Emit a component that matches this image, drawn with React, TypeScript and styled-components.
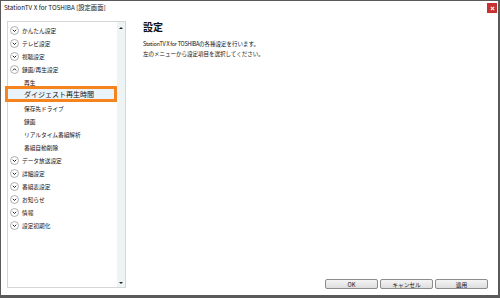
import React from 'react';
import styled, { createGlobalStyle } from 'styled-components';

const Global = createGlobalStyle`
  html, body { margin: 0; padding: 0; background: #ffffff; }
  body { font-family: "Noto Sans CJK JP", "Noto Sans", sans-serif; color: #111; }
`;

const Window = styled.div`
  width: 500px;
  height: 298px;
  box-sizing: border-box;
  border-style: solid;
  border-color: #5a5a5a;
  border-width: 1px 2px 3px 1px;
  background: #ffffff;
  display: flex;
  flex-direction: column;
`;

const TitleBar = styled.div`
  height: 14px;
  display: flex;
  justify-content: space-between;
  align-items: flex-start;
  padding-left: 3px;
`;

const TitleText = styled.span`
  font-size: 6.3px;
  line-height: 13px;
  color: #111;
  white-space: nowrap;
`;

const CloseButton = styled.div`
  width: 10px;
  height: 10px;
  margin-top: 2px;
  margin-right: 1px;
  background: #c8312f;
  display: flex;
  align-items: center;
  justify-content: center;
`;

const Body = styled.div`
  flex: 1;
  display: flex;
  padding: 6px 10px 6px 6px;
  min-height: 0;
`;

const TreePanel = styled.div`
  width: 119px;
  box-sizing: border-box;
  border: 1px solid #d6d6d6;
  margin-bottom: 1px;
  display: flex;
`;

const TreeList = styled.div`
  flex: 1;
  padding-top: 2px;
  position: relative;
`;

const Row = styled.div<{ $sub?: boolean }>`
  height: 13px;
  display: flex;
  align-items: center;
  padding-left: ${p => (p.$sub ? '16px' : '2px')};
  gap: 3px;
  position: relative;
  font-size: 5.7px;
  white-space: nowrap;
  color: #111;
`;

const Highlight = styled.div`
  position: absolute;
  left: -3px;
  top: -3px;
  width: 112px;
  height: 16px;
  box-sizing: border-box;
  border: 3px solid #f5841f;
  background: #e8f3fb;
  display: flex;
  align-items: center;
  padding-left: 16px;
  font-size: 7px;
  color: #111;
  z-index: 2;
`;

const ScrollBar = styled.div`
  width: 8px;
  background: #eef3f3;
  display: flex;
  flex-direction: column;
  justify-content: space-between;
  align-items: center;
  padding: 5px 0 3px;
`;

const Arrow = styled.div<{ $up?: boolean }>`
  width: 0;
  height: 0;
  border-left: 2px solid transparent;
  border-right: 2px solid transparent;
  ${p => (p.$up ? 'border-bottom: 2px solid #222;' : 'border-top: 2px solid #222;')}
`;

const Main = styled.div`
  flex: 1;
  margin-left: 17px;
  display: flex;
  flex-direction: column;
`;

const Heading = styled.div`
  font-size: 10px;
  line-height: 12px;
  font-weight: 700;
  color: #111;
`;

const Description = styled.div`
  margin-top: 6px;
  font-size: 5.5px;
  line-height: 10px;
  color: #111;
  white-space: nowrap;
`;

const Latin = styled.span`
  letter-spacing: -0.25px;
`;

const ButtonRow = styled.div`
  margin-top: auto;
  display: flex;
  justify-content: flex-end;
  gap: 2px;
`;

const Button = styled.div`
  width: 53px;
  height: 10px;
  box-sizing: border-box;
  border: 1px solid #8c8c8c;
  border-radius: 2px;
  background: linear-gradient(#f4f4f4, #dedede);
  display: flex;
  align-items: center;
  justify-content: center;
  font-size: 5.7px;
  color: #111;
`;

const Toggle = ({ up }: { up?: boolean }) => (
  <svg width="9" height="9" viewBox="0 0 9 9">
    <circle cx="4.5" cy="4.5" r="4" fill="#fff" stroke="#9a9a9a" strokeWidth="0.8" />
    <path
      d={up ? 'M2.8 5.4 L4.5 3.7 L6.2 5.4' : 'M2.8 3.8 L4.5 5.5 L6.2 3.8'}
      fill="none"
      stroke="#222"
      strokeWidth="1"
    />
  </svg>
);

type Item = { label: string; sub?: boolean; up?: boolean; selected?: boolean };

const items: Item[] = [
  { label: 'かんたん設定' },
  { label: 'テレビ設定' },
  { label: '視聴設定' },
  { label: '録画/再生設定', up: true },
  { label: '再生', sub: true },
  { label: 'ダイジェスト再生時間', sub: true, selected: true },
  { label: '保存先ドライブ', sub: true },
  { label: '録画', sub: true },
  { label: 'リアルタイム番組解析', sub: true },
  { label: '番組自動削除', sub: true },
  { label: 'データ放送設定' },
  { label: '詳細設定' },
  { label: '番組表設定' },
  { label: 'お知らせ' },
  { label: '情報' },
  { label: '設定初期化' },
];

export default function App() {
  return (
    <>
      <Global />
      <Window>
        <TitleBar>
          <TitleText>StationTV X for TOSHIBA [設定画面]</TitleText>
          <CloseButton>
            <svg width="5" height="5" viewBox="0 0 5 5">
              <path d="M0.8 0.8 L4.2 4.2 M4.2 0.8 L0.8 4.2" stroke="#fff" strokeWidth="1.1" />
            </svg>
          </CloseButton>
        </TitleBar>
        <Body>
          <TreePanel>
            <TreeList>
              {items.map(it => (
                <Row key={it.label} $sub={it.sub}>
                  {!it.sub && <Toggle up={it.up} />}
                  {it.selected ? <Highlight>{it.label}</Highlight> : it.label}
                </Row>
              ))}
            </TreeList>
            <ScrollBar>
              <Arrow $up />
              <Arrow />
            </ScrollBar>
          </TreePanel>
          <Main>
            <Heading>設定</Heading>
            <Description>
              <Latin>StationTV X for TOSHIBA</Latin>の各種設定を行います。
              <br />
              左のメニューから設定項目を選択してください。
            </Description>
            <ButtonRow>
              <Button>OK</Button>
              <Button>キャンセル</Button>
              <Button>適用</Button>
            </ButtonRow>
          </Main>
        </Body>
      </Window>
    </>
  );
}
